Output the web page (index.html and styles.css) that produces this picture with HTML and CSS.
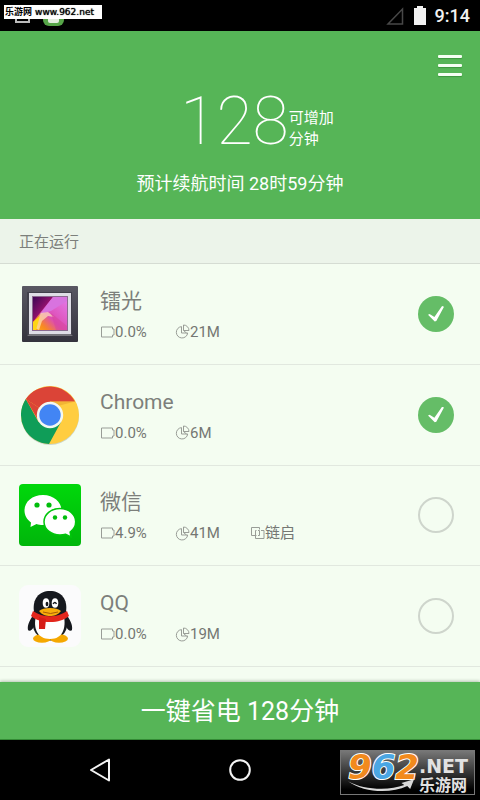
FILE: index.html
```html
<!DOCTYPE html>
<html lang="zh-CN">
<head>
<meta charset="utf-8">
<meta name="viewport" content="width=device-width, initial-scale=1">
<title>省电</title>
<link rel="stylesheet" href="styles.css">
</head>
<body>
<svg class="defs" aria-hidden="true">
  <symbol id="battery" viewBox="0 0 15 12"><path d="M1.500 1h11v2h1.500v6h-1.500v2h-11z" fill="none" stroke="currentColor"/></symbol>
  <symbol id="pie" viewBox="0 0 15 15"><path d="M6.500 2.600a5.700 5.700 0 1 0 6.200 6.400H6.500z M8.500 1v5.500H14A5.500 5.500 0 0 0 8.500 1z M8.500 6.500l3 2.500" fill="none" stroke="currentColor"/></symbol>
  <symbol id="link" viewBox="0 0 15 12"><path d="M6.500 8.500h-5v-8h8v2M6.500 3.500h-1v8h8.500v-8h-3M8 3.500h1.500v5H8" fill="none" stroke="currentColor"/></symbol>
</svg>
<div class="screen">
  <div class="status">
    <div class="notices">
      <svg width="60" height="31" viewBox="0 0 60 31" aria-hidden="true">
        <rect x="1" y="9" width="13" height="13" fill="none" stroke="#bbb" stroke-width="2"/>
        <rect x="28" y="5" width="21" height="21" rx="6" fill="#56a548"/>
        <rect x="33" y="10" width="11" height="13" rx="2" fill="#e3eddf"/>
      </svg>
      <div class="source-tag"><span>乐游网</span> <b>www.962.net</b></div>
    </div>
    <svg class="signal" width="18" height="18" viewBox="0 0 18 18" aria-hidden="true"><path d="M2 17h14.500V2z" fill="none" stroke="#484848" stroke-width="1.500"/></svg>
    <svg class="power" width="12" height="19" viewBox="0 0 12 19" aria-hidden="true"><path d="M0 2h3V0h6v2h3v17H0z" fill="#f2f2f2"/></svg>
    <time>9:14</time>
  </div>

  <header class="hero">
    <button class="menu" type="button" aria-label="菜单"><i></i><i></i><i></i></button>
    <div class="gain">
      <span class="number">128</span>
      <span class="unit">可增加<br>分钟</span>
    </div>
    <p class="estimate">预计续航时间 28时59分钟</p>
  </header>

  <h2 class="section">正在运行</h2>
  <ul class="apps">
    <li>
      <svg class="icon" viewBox="0 0 64 64" aria-hidden="true">
        <defs>
          <linearGradient id="frame" x2="0" y2="1"><stop stop-color="#595863"/><stop offset="1" stop-color="#34333d"/></linearGradient>
          <linearGradient id="art" x1="0" y1="1" x2="1" y2="0"><stop stop-color="#ffae18"/><stop offset=".2" stop-color="#f98a20"/><stop offset=".45" stop-color="#dd4db4"/><stop offset="1" stop-color="#e47bea"/></linearGradient>
          <linearGradient id="dusk" x2="1" y2="1"><stop stop-color="#3d0755"/><stop offset=".6" stop-color="#a21470"/><stop offset="1" stop-color="#ef5a49"/></linearGradient>
        </defs>
        <rect x="4" y="4" width="56" height="56" rx="1" fill="url(#frame)"/>
        <path d="M9 10h45v43H9z" fill="#41404b"/>
        <path d="M9 54l4-3h38l4 3z" fill="#77767c"/>
        <rect x="11" y="11" width="42" height="41" fill="#dfdee6"/>
        <rect x="14" y="14" width="36" height="35" fill="#8c6a90"/>
        <rect x="15" y="15" width="34" height="33" fill="url(#art)"/>
        <path d="M15 15h20L22 31l-7 9z" fill="url(#dusk)"/>
        <path d="M22 32l13-17h14v4L33 29z" fill="#d873df"/>
        <path d="M15 45l8-14 7-1 6 5-6-1-6 5-3 9z" fill="#fff0bb" opacity=".65"/>
        <path d="M15 40l7-6-4 14h-3z" fill="#ffd516"/>
        <path d="M33 31l16 13v4H38z" fill="#d7459b" opacity=".55"/>
      </svg>
      <label class="info" for="app1"><span class="name">镭光</span>
        <span class="stats"><span><svg class="bat"><use href="#battery"/></svg>0.0%</span><span><svg class="pie"><use href="#pie"/></svg>21M</span></span></label>
      <input id="app1" type="checkbox" checked>
    </li>
    <li>
      <svg class="icon" viewBox="0 0 64 64" aria-hidden="true">
        <circle cx="32" cy="33" r="29" fill="#cbd6ca"/>
        <circle cx="32" cy="32" r="29" fill="#ffcd40"/>
        <path d="M32 32L7.800 16A29 29 0 0 1 57 18.500H32z" fill="#db4437"/>
        <path d="M7.800 16A29 29 0 0 0 31 61l12-22-11-7-11.500 7z" fill="#0f9d58"/>
        <path d="M7.800 16l13 22.500L32 32z" fill="#db4437"/>
        <path d="M32 18.500h25L40 23z" fill="#e9a52e" opacity=".6"/>
        <circle cx="32" cy="32" r="13.200" fill="#f4f8f2"/>
        <circle cx="32" cy="32" r="10.700" fill="#4285f4"/>
      </svg>
      <label class="info" for="app2"><span class="name">Chrome</span>
        <span class="stats"><span><svg class="bat"><use href="#battery"/></svg>0.0%</span><span><svg class="pie"><use href="#pie"/></svg>6M</span></span></label>
      <input id="app2" type="checkbox" checked>
    </li>
    <li>
      <svg class="icon" viewBox="0 0 64 64" aria-hidden="true">
        <defs><linearGradient id="chat" x2="0" y2="1"><stop stop-color="#00d80b"/><stop offset="1" stop-color="#00b60b"/></linearGradient></defs>
        <rect x="1" y="1" width="62" height="62" rx="4" fill="url(#chat)"/>
        <path d="M25 12C14 12 6.500 19 6.500 27.500c0 5 2.500 9 6.500 12L12.500 44l6-3c2 .7 4 1 6.500 1 11 0 18.500-6.500 18.500-14.500S36 12 25 12z" fill="#fff"/>
        <path d="M42 25.500c-9 0-16 6-16 13.300S33 52 42 52c2 0 4-.3 5.700-.8l5.300 2.600-.9-4.700c3.500-2.500 5.600-6 5.600-10.300 0-7.300-6.700-13.300-15.700-13.300z" fill="#fff" stroke="#00c60b" stroke-width="1.500"/>
        <g fill="#00bd0b"><circle cx="19" cy="22" r="2.600"/><circle cx="31" cy="22" r="2.600"/><circle cx="37" cy="34.500" r="2.200"/><circle cx="47" cy="34.500" r="2.200"/></g>
      </svg>
      <label class="info" for="app3"><span class="name">微信</span>
        <span class="stats"><span><svg class="bat"><use href="#battery"/></svg>4.9%</span><span><svg class="pie"><use href="#pie"/></svg>41M</span><span><svg class="bat"><use href="#link"/></svg>链启</span></span></label>
      <input id="app3" type="checkbox">
    </li>
    <li>
      <svg class="icon" viewBox="0 0 64 64" aria-hidden="true">
        <rect x="1" y="1" width="62" height="62" rx="9" fill="#fbfbfc"/>
        <path d="M17 29c-5 6-8 12-7 17 1 2 5 0 6-4zM47 29c5 6 8 12 7 17-1 2-5 0-6-4z" fill="#16191e"/>
        <ellipse cx="32" cy="39" rx="17.500" ry="17.500" fill="#16191e"/>
        <ellipse cx="24" cy="54.500" rx="9" ry="4.300" fill="#f5a800"/>
        <ellipse cx="41" cy="54.500" rx="9" ry="4.300" fill="#f5a800"/>
        <path d="M18 32h28c2 12-1 23-14 23S15 44 18 32z" fill="#fff"/>
        <path d="M16 28C14 15 21 7 32 7s18 8 16 21c-3 5-9 7-16 7s-13-2-16-7z" fill="#16191e"/>
        <ellipse cx="28" cy="19" rx="3.300" ry="4.800" fill="#fff"/><ellipse cx="37" cy="19" rx="3.300" ry="4.800" fill="#fff"/>
        <ellipse cx="29" cy="20" rx="1.400" ry="2.200" fill="#16191e"/><path d="M35 20q2-3 3.500 0" fill="none" stroke="#16191e" stroke-width="1.300"/>
        <path d="M15 27c10 7 24 7 34 0l2 5c-5 4-11 6-19 6s-14-2-19-6z" fill="#e3261c"/>
        <path d="M21 33l7 2-1 10h-6z" fill="#d61d18"/>
        <path d="M21 27c4-4 18-4 22 0-3 4-7 5-11 5s-8-1-11-5z" fill="#f8ad0b"/>
        <path d="M25 28q7.500 3 15 0" fill="none" stroke="#a95c06"/>
      </svg>
      <label class="info" for="app4"><span class="name">QQ</span>
        <span class="stats"><span><svg class="bat"><use href="#battery"/></svg>0.0%</span><span><svg class="pie"><use href="#pie"/></svg>19M</span></span></label>
      <input id="app4" type="checkbox">
    </li>
  </ul>

  <button class="save" type="button">一键省电 128分钟</button>

  <nav class="keys">
    <button type="button" aria-label="返回"><svg width="24" height="26" viewBox="0 0 24 26"><path d="M3 13L21 2.500v21z" fill="none" stroke="#f4f4f4" stroke-width="2" stroke-linejoin="round"/></svg></button>
    <button type="button" aria-label="主页"><svg width="24" height="26" viewBox="0 0 24 26"><circle cx="12" cy="13" r="9.800" fill="none" stroke="#f4f4f4" stroke-width="2"/></svg></button>
    <span></span>
    <div class="brand">
      <div class="digits"><span>9</span><span class="blue">6</span><span>2</span></div>
      <div class="words"><span class="net">.NET</span><span class="site">乐游网</span></div>
      <svg class="swoosh" viewBox="0 0 70 14" aria-hidden="true"><path d="M0 2c16 9 42 10 58 4l-3-2 13-4-4 10-3-3C44 15 16 14 0 2z" fill="#d8d8d8"/></svg>
    </div>
  </nav>
</div>
</body>
</html>
```
FILE: styles.css
```css
* { box-sizing: border-box; }

body {
  margin: 0;
  background: #000;
  color: #7c7f7b;
  font-family: Roboto, "Noto Sans CJK SC", sans-serif;
}

button {
  border: 0;
  padding: 0;
  background: none;
  color: inherit;
  font-family: inherit;
}

.defs { position: absolute; width: 0; height: 0; }

.screen {
  display: flex;
  flex-direction: column;
  min-height: 100vh;
  background: #f4fdf1;
}

.status {
  display: flex;
  align-items: center;
  height: 31px;
  padding-right: 10px;
  background: #000;
  color: #f2f2f2;
}

.notices { position: relative; flex: 1; height: 31px; padding-left: 15px; }
.notices svg { display: block; }

.source-tag {
  position: absolute;
  left: 4px;
  top: 5px;
  display: flex;
  gap: 3px;
  width: 98px;
  height: 14px;
  padding-left: 1px;
  background: #fff;
  color: #000;
  font-size: 9px;
  font-weight: 700;
  line-height: 14px;
  white-space: nowrap;
}

.source-tag b { font-family: "DejaVu Sans", sans-serif; font-weight: 400; text-shadow: 0 0 1px #000; }

.signal { margin-right: 10px; }
.power { margin-right: 9px; }

.status time { font-size: 18px; font-weight: 500; line-height: 32px; }

.hero {
  position: relative;
  height: 188px;
  padding-top: 50px;
  background: #56b557;
  color: #fff;
}

.menu {
  position: absolute;
  right: 18px;
  top: 24px;
  display: grid;
  gap: 6px;
  width: 24px;
}

.menu i { height: 3px; border-radius: 1px; background: #f5fff3; box-shadow: 0 1px 1px #3d963f; }

.gain {
  display: flex;
  justify-content: center;
  align-items: center;
  height: 82px;
  padding-left: 34px;
}

.number { font-size: 66px; font-weight: 100; line-height: 82px; }
.unit { padding-top: 14px; font-size: 15px; line-height: 21px; }

.estimate {
  margin: 8px 0 0;
  font-size: 18px;
  line-height: 26px;
  text-align: center;
}

.section {
  height: 45px;
  margin: 0;
  padding-left: 19px;
  border-bottom: 1px solid #d5dcd3;
  background: #ecf4ea;
  font-size: 15px;
  font-weight: 400;
  line-height: 46px;
}

.apps {
  display: grid;
  grid-auto-rows: 1fr;
  flex: 1;
  margin: 0;
  padding: 0 0 15px;
  list-style: none;
}

.apps li {
  display: flex;
  align-items: center;
  padding: 0 26px 0 18px;
  border-bottom: 1px solid #e1e8df;
}

.icon { width: 64px; height: 64px; }

.info { flex: 1; padding-left: 18px; }

.name { display: block; font-size: 21px; line-height: 34px; }
.stats { display: flex; margin-top: 2px; color: #747773; font-size: 15px; line-height: 24px; }
.stats > span { display: flex; align-items: center; width: 75px; white-space: nowrap; }
.stats svg { flex: none; width: 15px; color: #999d97; }
.bat { height: 12px; }
.pie { height: 15px; }

.apps input {
  appearance: none;
  width: 36px;
  height: 36px;
  margin: 0;
  border: 2px solid #ced5cc;
  border-radius: 50%;
}

.apps input:checked {
  display: grid;
  place-items: center;
  border: 0;
  background: #65bd67;
}

.apps input:checked::before {
  content: "";
  width: 16px;
  height: 16px;
  background: #fff;
  clip-path: polygon(0 55%, 10% 50%, 40% 70%, 88% 0, 100% 6%, 52% 94%, 42% 98%);
}

.save {
  height: 58px;
  padding-top: 2px;
  border-bottom: 1px solid #348b35;
  background: #56b557;
  box-shadow: 0 -1px 3px #b4c4b1;
  color: #fff;
  font-size: 25px;
  line-height: 55px;
}

.keys {
  position: relative;
  display: grid;
  grid-template-columns: repeat(3, 1fr);
  height: 60px;
  padding: 0 30px;
  background: #000;
}

.keys svg { display: block; margin: 0 auto; }

.brand {
  position: absolute;
  right: 5px;
  bottom: 5px;
  display: flex;
  width: 135px;
  height: 45px;
  padding-left: 7px;
  border: 1px solid #777;
  background: linear-gradient(#777, #000 90%);
}

.digits {
  display: flex;
  width: 71px;
  color: #f28a1d;
  font: italic 700 34px/32px "DejaVu Sans", sans-serif;
  paint-order: stroke fill;
  -webkit-text-stroke: 2px #fff;
}

.blue { color: #4aa6e3; }

.words { display: flex; flex-direction: column; color: #e2e2e2; font-weight: 700; }
.net { padding-top: 3px; font: 700 19px/24px "DejaVu Sans", sans-serif; }
.site { font-size: 16px; line-height: 15px; }

.brand .swoosh { position: absolute; left: 7px; bottom: 1px; width: 68px; height: 14px; }
```
